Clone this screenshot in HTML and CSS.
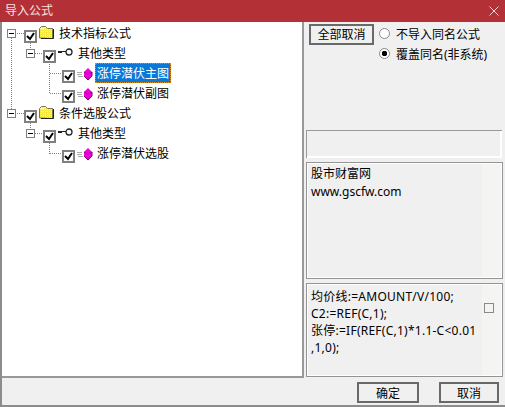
FILE: index.html
```html
<!DOCTYPE html>
<html lang="zh">
<head>
<meta charset="utf-8">
<title>导入公式</title>
<link rel="stylesheet" href="styles.css">
</head>
<body>
<svg class="defs" width="0" height="0">
  <defs>
    <pattern id="dither" width="2" height="2" patternUnits="userSpaceOnUse"><rect width="2" height="2" fill="#f7ea3a"/><rect width="1" height="1" fill="#fdf8b0"/></pattern>
    <symbol id="tick" viewBox="0 0 9 9"><path d="M1 4l3 3 4-6" class="tick"/></symbol>
    <symbol id="folder" viewBox="0 0 15 14"><path d="M.5 13V3.5l2-2h4l2 2h5v10z" fill="url(#dither)" stroke="#77774a"/><path d="M1.5 3.5h4" stroke="#fffbd0"/><path d="M14.500 4v9.500H2" stroke="#222" fill="none"/></symbol>
    <symbol id="key" viewBox="0 0 15 8"><circle cx="11" cy="4" r="3" fill="#fff" stroke="#222" stroke-width="1.300"/><path d="M8 3.500H0M0 4.500h4" stroke="#222" fill="none"/></symbol>
    <symbol id="gem" viewBox="0 0 16 12"><path d="M0 4.500h5M0 6.500h5M1 8.500h5" stroke="#aaa"/><path d="M11 0l4 4v4l-4 4-4-4V4z" fill="#f000d8"/><path d="M7 4l4 2 4-2" fill="none" stroke="#b000a8"/><path d="M15 4v4l-4 4-4-4" fill="none" stroke="#700070"/></symbol>
  </defs>
</svg>
<div class="window">
  <header class="titlebar">
    <span class="title">导入公式</span>
    <svg class="close" width="10" height="10" viewBox="0 0 10 10"><path d="M.5.5l9 9M9.5.5l-9 9" stroke="#f0d8d8" stroke-width="1" fill="none"/></svg>
  </header>
  <div class="main">
    <section class="tree">
      <svg class="links" width="80" height="170" viewBox="0 0 80 170">
        <g stroke="#808080" stroke-dasharray="1 1" fill="none" shape-rendering="crispEdges">
          <path d="M11.5 12V84M15 7.5h9M30.5 17v7M35 27.5h8M49.5 36V67.5M49.5 47.5H62M49.5 67.5H62"/>
          <path d="M15 87.5h9M30.5 97v7M35 107.5h8M49.5 117v10.5M49.5 127.5H62"/>
        </g>
      </svg>
      <div class="row lvl0">
        <span class="exp"></span><span class="chk"><svg width="9" height="9"><use href="#tick"/></svg></span>
        <svg class="folder" width="15" height="14"><use href="#folder"/></svg>
        <span class="label">技术指标公式</span>
      </div>
      <div class="row lvl1">
        <span class="exp"></span><span class="chk"><svg width="9" height="9"><use href="#tick"/></svg></span>
        <svg class="key" width="15" height="8"><use href="#key"/></svg>
        <span class="label">其他类型</span>
      </div>
      <div class="row lvl2">
        <span class="chk"><svg width="9" height="9"><use href="#tick"/></svg></span>
        <svg class="gem" width="16" height="12"><use href="#gem"/></svg>
        <span class="label selected">涨停潜伏主图</span>
      </div>
      <div class="row lvl2">
        <span class="chk"><svg width="9" height="9"><use href="#tick"/></svg></span>
        <svg class="gem" width="16" height="12"><use href="#gem"/></svg>
        <span class="label">涨停潜伏副图</span>
      </div>
      <div class="row lvl0">
        <span class="exp"></span><span class="chk"><svg width="9" height="9"><use href="#tick"/></svg></span>
        <svg class="folder" width="15" height="14"><use href="#folder"/></svg>
        <span class="label">条件选股公式</span>
      </div>
      <div class="row lvl1">
        <span class="exp"></span><span class="chk"><svg width="9" height="9"><use href="#tick"/></svg></span>
        <svg class="key" width="15" height="8"><use href="#key"/></svg>
        <span class="label">其他类型</span>
      </div>
      <div class="row lvl2">
        <span class="chk"><svg width="9" height="9"><use href="#tick"/></svg></span>
        <svg class="gem" width="16" height="12"><use href="#gem"/></svg>
        <span class="label">涨停潜伏选股</span>
      </div>
    </section>
    <aside class="side">
      <div class="options">
        <button class="btn all">全部取消</button>
        <div class="radios">
          <div class="radio-row"><span class="radio"></span><span>不导入同名公式</span></div>
          <div class="radio-row"><span class="radio on"></span><span>覆盖同名(非系统)</span></div>
        </div>
      </div>
      <div class="groove"></div>
      <div class="box info"><p class="text">股市财富网<br>www.gscfw.com</p><span class="gutter"></span></div>
      <div class="box code">
        <p class="text">均价线:=AMOUNT/V/100;<br>C2:=REF(C,1);<br>张停:=IF(REF(C,1)*1.1-C&lt;0.01<br>,1,0);</p>
        <span class="gutter"><span class="mini"></span></span>
      </div>
    </aside>
  </div>
  <footer class="footer">
    <button class="btn ok">确定</button>
    <button class="btn cancel">取消</button>
  </footer>
</div>
</body>
</html>
```
FILE: styles.css
```css
* { box-sizing: border-box; }
html, body { margin: 0; padding: 0; }
body { width: 505px; height: 407px; overflow: hidden; font-family: "Noto Sans", "Noto Sans CJK SC", sans-serif; font-size: 12px; color: #000; background: #f0f0f0; }
.defs { display: block; height: 0; }
.window { width: 505px; height: 407px; display: flex; flex-direction: column; border: solid #8c8c8c; border-width: 0 0 2px 2px; background: #f0f0f0; }
.titlebar { height: 22px; margin-left: -2px; padding: 0 6px 0 5px; display: flex; align-items: center; justify-content: space-between; background: #b33036; color: #f4e4e4; flex: none; }
.title { line-height: 22px; }
.close { display: block; }
.main { display: flex; height: 356px; flex: none; }
.tree { position: relative; width: 302px; flex: none; padding-top: 4px; background: #fff; border: solid #999; border-width: 0 2px 2px 0; }
.links { position: absolute; left: -2px; top: 4px; }
.row { position: relative; height: 20px; display: flex; align-items: center; }
.lvl0 { padding-left: 5px; }
.lvl1 { padding-left: 24px; }
.lvl2 { padding-left: 60px; }
.exp { width: 9px; height: 9px; margin: 0 8px 6px 0; border: 1px solid #808080; background: linear-gradient(#000, #000) center / 5px 1px no-repeat #fff; flex: none; }
.chk { width: 13px; height: 13px; border: 2px solid #808080; background: #fff; display: flex; align-items: center; justify-content: center; flex: none; }
.tick { fill: none; stroke: #000; stroke-width: 2; }
.folder { margin: 0 3px 8px 2px; flex: none; }
.key { margin: 0 3px 8px 2px; flex: none; }
.gem { margin: 0 2px 4px 2px; flex: none; }
.label { line-height: 22px; padding: 0 2px; height: 20px; margin-bottom: 6px; white-space: nowrap; }
.selected { background: #0a78d7; color: #fff; outline: 1px dotted #e08a20; outline-offset: -1px; }
.side { flex: 1; min-width: 0; padding: 0 0 0 2px; display: flex; flex-direction: column; }
.options { height: 108px; padding: 2px 0 0 3px; display: flex; flex: none; }
.btn { font: inherit; color: #000; background: #f0f0f0; border: 2px solid #696969; padding: 0; display: block; }
.all { width: 65px; height: 21px; flex: none; line-height: 17px; }
.radios { margin-left: 5px; }
.radio-row { height: 20px; display: flex; align-items: center; gap: 6px; }
.radio { width: 11px; height: 11px; margin-bottom: 2px; border-radius: 50%; border: 1px solid #8a8a8a; background: #fff; flex: none; }
.radio.on { background: radial-gradient(circle, #000 2.5px, #fff 3px); }
.groove { height: 28px; margin-right: 3px; border: solid #999; border-width: 1px 0 0 1px; box-shadow: inset -2px -2px 0 #fff; flex: none; }
.box { margin-top: 4px; width: 197px; border: 1px solid #949494; outline: 1px solid #fff; outline-offset: -2px; display: flex; flex: none; }
.info { height: 117px; }
.code { height: 94px; }
.text { margin: 0; padding: 2px 0 0 4px; flex: 1; white-space: nowrap; }
.info .text { line-height: 18px; }
.code .text { line-height: 17px; padding-top: 4px; letter-spacing: .25px; }
.gutter { width: 19px; background: #f4f4f2; flex: none; padding: 18px 0 0 2px; margin: 1px; }
.mini { display: block; width: 10px; height: 10px; border: 1px solid #8a8a8a; }
.footer { flex: 1; display: flex; padding: 4px 0 0 355px; }
.ok { width: 62px; height: 21px; }
.cancel { width: 60px; height: 21px; margin-left: 20px; }
```
